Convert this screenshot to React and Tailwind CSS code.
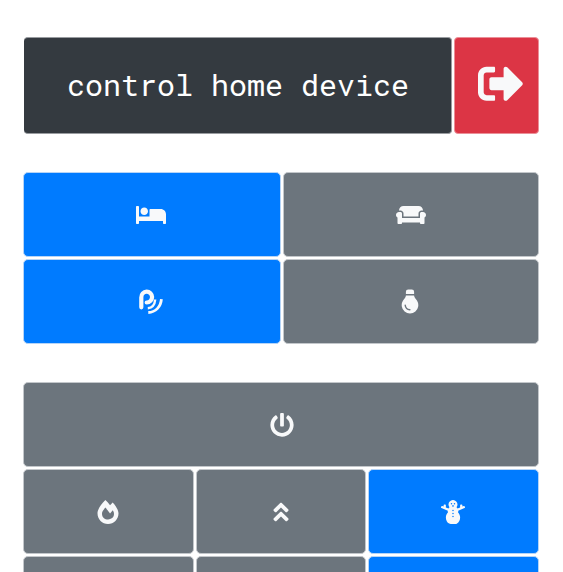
import { FaBed, FaCouch, FaPowerOff, FaSnowman, FaSignOutAlt, FaAngleDoubleUp, FaFireAlt } from "react-icons/fa";

function Shower() {
  return (
    <svg width="25" height="26" viewBox="0 0 25 26" fill="none" stroke="currentColor">
      <path d="M2.3 18.3V8.3a5.4 5.4 0 1 1 5.4 5.2" strokeWidth="4.2" strokeLinecap="round" />
      <path d="M8.8 19.2c4.2-.3 7-3.6 7.4-8.7" strokeWidth="2.4" />
      <path d="M9.3 23.5c7.2-.3 12.6-5.6 13.1-13.3" strokeWidth="2.8" />
    </svg>
  );
}

function Bulb() {
  return (
    <svg width="18" height="25" viewBox="0 0 18 25">
      <path fill="currentColor" d="M4.9 4.9V2.8Q4.9.4 7.2.4h3.6q2.3 0 2.3 2.4v2.1zM4.9 6.5h8.2c.1 2.3 1.9 3.5 3 5.3a8.3 8.3 0 1 1-14.2 0c1.1-1.8 2.9-3 3-5.3z" />
      <path d="M4.2 16.2c.3 2.6 2.2 4.5 4.7 4.5" fill="none" stroke="#6c757d" strokeWidth="1.4" strokeLinecap="round" />
    </svg>
  );
}

function Cell({ active, children, className = "" }) {
  return (
    <button className={`flex h-[85px] items-center justify-center rounded-[5px] border text-[#f8f9fa] ${active ? "border-[#b5d4f7] bg-[#007bff]" : "border-[#c3c7cb] bg-[#6c757d]"} ${className}`}>
      {children}
    </button>
  );
}

export default function App() {
  return (
    <main className="h-[572px] overflow-hidden bg-white pr-[24px] pl-[23px] pt-[37px]">
      <header className="flex h-[97px] gap-[2px] pl-px">
        <h1 className="flex flex-1 items-center justify-center rounded-[4px] border-y border-r border-[#999ca0] bg-[#343a40] pb-px pl-px font-['Roboto_Mono','Liberation_Mono',monospace] text-[30px] leading-none whitespace-pre text-white">
          control home device
        </h1>
        <button className="flex w-[85px] items-center justify-center rounded-[4px] border border-[#eb8f98] bg-[#dc3545] pl-[8px] pb-[3px] text-[#f8f9fa]">
          <FaSignOutAlt size={45.5} className="shrink-0" />
        </button>
      </header>
      <section className="mt-[38px] grid grid-cols-[258px_256px] gap-[2px]">
        <Cell active className="pr-[2px]"><FaBed size={24} className="w-[30px]" /></Cell>
        <Cell><FaCouch size={24} className="w-[30px]" /></Cell>
        <Cell active className="pr-px pt-px"><Shower /></Cell>
        <Cell className="pr-[2px]"><Bulb /></Cell>
      </section>
      <section className="mt-[38px] grid grid-cols-3 gap-[2px]">
        <Cell className="col-span-3 pl-[2px] pt-px"><FaPowerOff size={24} /></Cell>
        <Cell className="pt-px"><FaFireAlt size={24} /></Cell>
        <Cell className="pt-px"><FaAngleDoubleUp size={24} /></Cell>
        <Cell active className="pr-[2px] pt-px"><FaSnowman size={24} /></Cell>
        <Cell />
        <Cell />
        <Cell active />
      </section>
    </main>
  );
}
